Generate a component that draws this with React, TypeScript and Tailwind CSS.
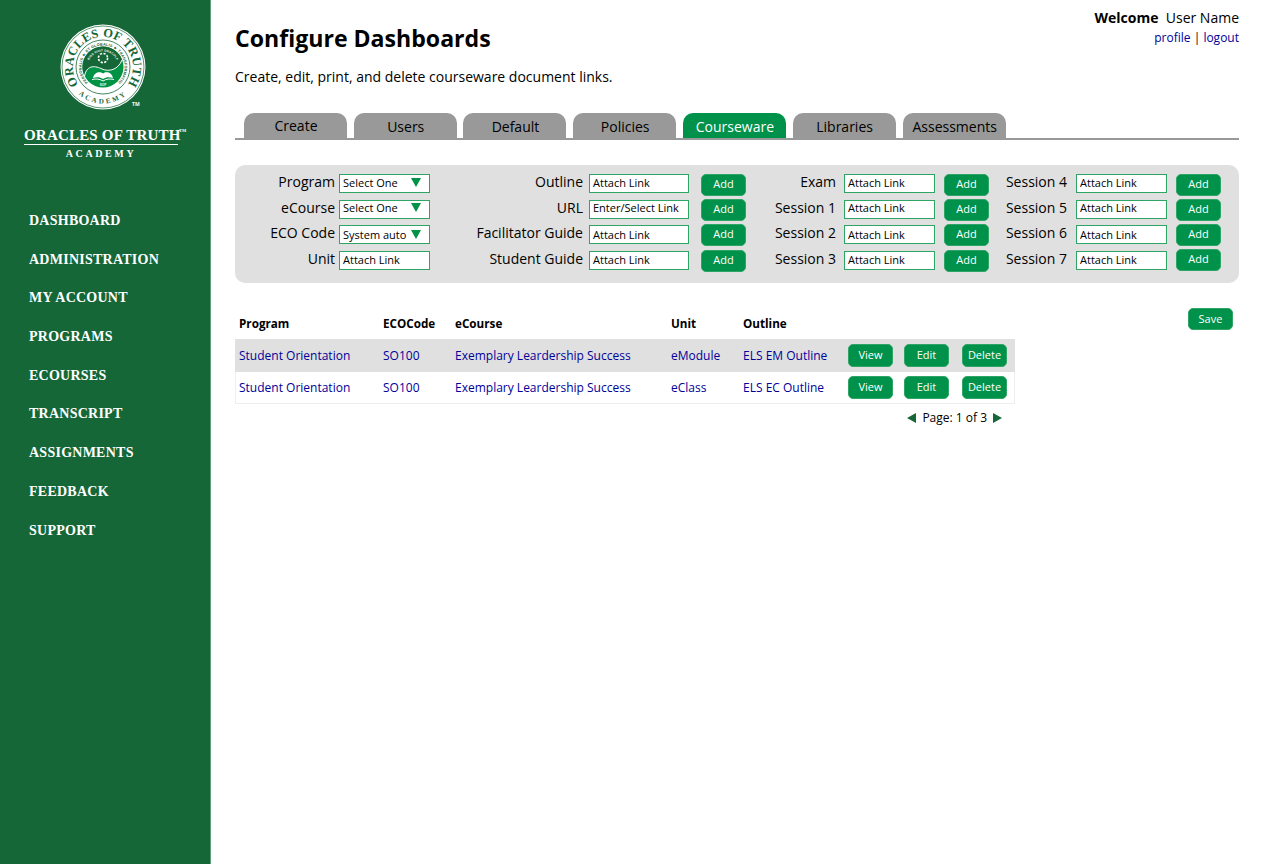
import React from "react";

const nav = ["DASHBOARD","ADMINISTRATION","MY ACCOUNT","PROGRAMS","ECOURSES","TRANSCRIPT","ASSIGNMENTS","FEEDBACK","SUPPORT"];
const tabs = ["Create","Users","Default","Policies","Courseware","Libraries","Assessments"];

function Seal() {
  return (
    <svg width="90" height="90" viewBox="0 0 90 90" className="block">
      <defs>
        <path id="topArc" d="M45 75 A30 30 0 1 1 45.01 75" />
        <path id="botArc" d="M45 8.5 A36.5 36.5 0 1 0 45.01 8.5" />
        <path id="midArc" d="M45 66.5 A21.5 21.5 0 1 1 45.01 66.5" />
        <path id="inArc" d="M45 60.5 A15.5 15.5 0 1 1 45.01 60.5" />
      </defs>
      <circle cx="45" cy="45" r="42.5" fill="#fff" />
      <circle cx="45" cy="45" r="41" fill="none" stroke="#156738" strokeWidth="0.7" />
      <text fontFamily="'Liberation Serif',serif" fontSize="12.5" fontWeight="700" fill="#156738" letterSpacing="0.2">
        <textPath href="#topArc" startOffset="50%" textAnchor="middle">ORACLES OF TRUTH</textPath>
      </text>
      <text fontFamily="'Liberation Serif',serif" fontSize="7" fontWeight="700" fill="#156738" letterSpacing="2.4">
        <textPath href="#botArc" startOffset="50%" textAnchor="middle">ACADEMY</textPath>
      </text>
      <circle cx="45" cy="45" r="27" fill="#fff" stroke="#156738" strokeWidth="0.8" />
      <text fontFamily="'Liberation Sans',sans-serif" fontSize="3.8" fontWeight="700" fill="#156738" letterSpacing="0.15">
        <textPath href="#midArc" startOffset="50%" textAnchor="middle">PERSONALIS ★ ET GLOBALIS ★ TRANSFORMATIO</textPath>
      </text>
      <circle cx="45" cy="45" r="20.5" fill="#009245" />
      <path d="M45 24.5 A20.5 20.5 0 0 0 26.5 54 C 29 42 38 44 44 47 C 51 50 60 48 64 38 A20.5 20.5 0 0 0 45 24.5Z" fill="#156738" />
      <path d="M26.5 54 C 29 42 38 44 44 47 C 51 50 60 48 64 38" fill="none" stroke="#fff" strokeWidth="1" />
      <text fontFamily="'Liberation Sans',sans-serif" fontSize="3" fontWeight="700" fill="#fff" letterSpacing="0.15">
        <textPath href="#inArc" startOffset="50%" textAnchor="middle">BIOS VIVIT ORACULA</textPath>
      </text>
      <circle cx="45" cy="36" r="4.6" fill="none" stroke="#fff" strokeWidth="1.6" strokeDasharray="2.2 1.4" />
      <path d="M35 56 C 36 50 42 49 45 51.5 C 48 49 54 50 55 56 C 51 54.5 48 55 45 57 C 42 55 39 54.5 35 56Z" fill="#fff" />
      <path d="M34 57.5 C 38 56.5 42 57 45 59 C 48 57 52 56.5 56 57.5" fill="none" stroke="#fff" strokeWidth="1" />
      <text x="45" y="63.5" textAnchor="middle" fontFamily="'Liberation Sans',sans-serif" fontSize="3" fontWeight="700" fill="#fff">SOP</text>
    </svg>
  );
}

function Field({ value, w, arrow, className = "" }: { value: string; w: string; arrow?: boolean; className?: string }) {
  return (
    <div className={`${w} ${className} h-[19px] bg-white border border-[#2ea565] flex items-center justify-between pl-[3px] pr-[8px] text-[11px] leading-none text-black`}>
      <span>{value}</span>
      {arrow && <span className="w-0 h-0 border-l-[5.5px] border-r-[5.5px] border-t-[9px] border-l-transparent border-r-transparent border-t-[#009245]" />}
    </div>
  );
}

function Btn({ label, className = "" }: { label: string; className?: string }) {
  return (
    <div className={`w-[45px] bg-[#00924a] border border-[#2ea565] rounded-[5px] flex items-center justify-center text-[11px] leading-none text-white ${className}`}>
      {label}
    </div>
  );
}

function Label({ text }: { text: string }) {
  return <div className="h-[19px] flex items-center justify-end pb-[4px] text-[14px] leading-none text-black">{text}</div>;
}

const formRows = [
  { l1: "Program", f1: "Select One", a: true, l2: "Outline", f2: "Attach Link", l3: "Exam", l4: "Session 4", shift: "pb-[2px]", h: "h-[26px]", m: "", m4: "" },
  { l1: "eCourse", f1: "Select One", a: true, l2: "URL", f2: "Enter/Select Link", l3: "Session 1", l4: "Session 5", shift: "pb-[4px]", h: "h-[25px]", m: "-mt-[1px]", m4: "-mt-[1px]" },
  { l1: "ECO Code", f1: "System auto", a: true, l2: "Facilitator Guide", f2: "Attach Link", l3: "Session 2", l4: "Session 6", shift: "pb-0", h: "h-[26px]", m: "-mt-[1px]", m4: "-mt-[1px]" },
  { l1: "Unit", f1: "Attach Link", a: false, l2: "Student Guide", f2: "Attach Link", l3: "Session 3", l4: "Session 7", shift: "pb-[2px]", h: "h-[22px]", m: "-mt-[1px]", m4: "-mt-[2px]" },
];

const rows = [
  { p: "Student Orientation", e: "SO100", c: "Exemplary Leardership Success", u: "eModule", o: "ELS EM Outline", bg: "bg-[#e0e0e0]", h: "h-[33px]", b: "", first: "pl-[4px]" },
  { p: "Student Orientation", e: "SO100", c: "Exemplary Leardership Success", u: "eClass", o: "ELS EC Outline", bg: "bg-white", h: "h-[32px]", b: "border-b border-[#eeeeee]", first: "border-l border-[#eeeeee] pl-[3px]" },
];

const link = "text-[#000099]";

export default function App() {
  return (
    <div className="flex min-h-[864px] bg-white text-black font-['Open_Sans',sans-serif]">
      <aside className="w-[211px] shrink-0 bg-[#156738] border-r border-[#5f9a78] flex flex-col">
        <div className="pt-[22px] pl-[57.5px] relative">
          <Seal />
          <span className="absolute left-[132px] top-[102px] text-[5px] font-bold leading-none text-white">TM</span>
        </div>
        <div className="mt-[16px] ml-[24px] w-[160px] relative text-white font-['Liberation_Serif',serif]">
          <div className="text-[15px] font-bold leading-[15px] tracking-[0.2px] whitespace-nowrap border-b border-white w-[154px] pb-[1px]">ORACLES OF TRUTH</div>
          <span className="absolute left-[155px] top-[1px] text-[4.5px] font-bold leading-none">TM</span>
          <div className="mt-[3px] w-[154px] text-center text-[10px] leading-[11px] font-bold tracking-[2.6px]">ACADEMY</div>
        </div>
        <nav className="mt-[52px] pl-[29px] flex flex-col gap-[18.7px] font-['Liberation_Serif',serif] font-bold text-[14px] tracking-[0.25px] leading-[20px] text-white">
          {nav.map((n) => <div key={n}>{n}</div>)}
        </nav>
      </aside>

      <main className="flex-1 min-w-0 pl-[24px] pr-[32px]">
        <div className="flex justify-between items-start h-[113px]">
          <div className="pt-[22px]">
            <h1 className="text-[23.1px] leading-[32px] font-bold">Configure Dashboards</h1>
            <p className="mt-[13px] text-[14px] leading-[19px]">Create, edit, print, and delete courseware document links.</p>
          </div>
          <div className="pt-[8px] text-right">
            <div className="text-[14px] leading-[20px]"><span className="font-bold">Welcome</span>&nbsp; User Name</div>
            <div className="text-[12px] leading-[17px] mt-[1px]"><span className={link}>profile</span> | <span className={link}>logout</span></div>
          </div>
        </div>

        <div className="h-[27px] border-b-2 border-[#999999] flex pl-[9px] gap-[6.72px]">
          {tabs.map((t) => (
            <div
              key={t}
              className={`w-[103px] ${t === "Courseware" ? "bg-[#00924a] text-white" : "bg-[#999999] text-black"} rounded-t-[10px] flex items-center justify-center pl-[1px] text-[14px] leading-none ${t === "Create" ? "pt-[1px]" : "pt-[3px]"} ${t === "Assessments" ? "ml-[0.4px]" : ""}`}
            >
              {t}
            </div>
          ))}
        </div>

        <div className="mt-[25px] h-[118px] w-[1004px] bg-[#e0e0e0] rounded-[10px] pt-[9px] flex flex-col">
          {formRows.map((r) => (
            <div key={r.l1} className={`grid grid-cols-[100px_95px_153px_106px_57px_90px_99px_54px_78px_100px_54px] items-start ${r.h}`}>
              <Label text={r.l1} />
              <Field value={r.f1} w="w-[91px]" arrow={r.a} className={`ml-[4px] ${r.shift}`} />
              <Label text={r.l2} />
              <Field value={r.f2} w="w-[100px]" className={`ml-[6px] ${r.shift}`} />
              <Btn label="Add" className={`ml-[12px] h-[22px] pb-[4px] ${r.m}`} />
              <Label text={r.l3} />
              <Field value="Attach Link" w="w-[91px]" className={`ml-[8px] ${r.shift}`} />
              <Btn label="Add" className={`ml-[9px] h-[22px] pb-[4px] ${r.m}`} />
              <Label text={r.l4} />
              <Field value="Attach Link" w="w-[91px]" className={`ml-[9px] ${r.shift}`} />
              <Btn label="Add" className={`ml-[9px] h-[22px] pb-[4px] ${r.m4}`} />
            </div>
          ))}
        </div>

        <div className="mt-[26px] flex items-start">
          <div className="w-[780px]">
            <table className="w-[780px] border-separate border-spacing-0 table-fixed text-[12px] leading-none">
              <colgroup>
                <col className="w-[144px]" />
                <col className="w-[72px]" />
                <col className="w-[216px]" />
                <col className="w-[72px]" />
                <col className="w-[104px]" />
                <col className="w-[172px]" />
              </colgroup>
              <thead>
                <tr className="h-[30px] text-left text-[11.7px]">
                  {["Program","ECOCode","eCourse","Unit","Outline",""].map((h, i) => (
                    <th key={i} className="pl-[4px] p-0 font-bold">{h}</th>
                  ))}
                </tr>
              </thead>
              <tbody>
                {rows.map((r, i) => (
                  <tr key={i} className={`${r.bg} ${r.h} ${link}`}>
                    <td className={`${r.first} ${r.b}`}>{r.p}</td>
                    <td className={`pl-[4px] ${r.b}`}>{r.e}</td>
                    <td className={`pl-[4px] ${r.b}`}>{r.c}</td>
                    <td className={`pl-[4px] ${r.b}`}>{r.u}</td>
                    <td className={`pl-[4px] ${r.b}`}>{r.o}</td>
                    <td className={`${r.b} ${i === 1 ? "border-r border-[#eeeeee]" : ""}`}>
                      <div className="flex pl-[5px]">
                        <Btn label="View" className="h-[23px] pb-[2px]" />
                        <Btn label="Edit" className="h-[23px] ml-[11px] pb-[2px]" />
                        <Btn label="Delete" className="h-[23px] ml-[13px] pb-[2px]" />
                      </div>
                    </td>
                  </tr>
                ))}
              </tbody>
            </table>
            <div className="mt-[5px] flex items-center justify-end pr-[13px] gap-[6px] text-[12px] leading-[17px]">
              <span className="w-0 h-0 border-y-[5px] border-r-[9px] border-y-transparent border-r-[#156738]" />
              <span>Page: 1 of 3</span>
              <span className="w-0 h-0 border-y-[5px] border-l-[9px] border-y-transparent border-l-[#156738]" />
            </div>
          </div>
          <Btn label="Save" className="ml-[173px] -mt-[1px] h-[22px] pb-[2px]" />
        </div>
      </main>
    </div>
  );
}
